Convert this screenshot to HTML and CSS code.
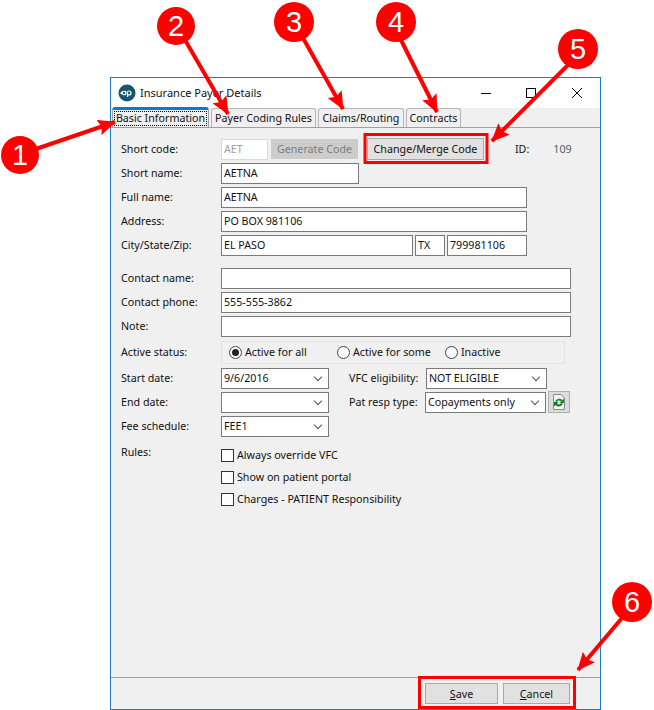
FILE: index.html
```html
<!DOCTYPE html>
<html lang="en">

<head>
    <meta charset="UTF-8">
    <meta name="viewport" content="width=device-width, initial-scale=1.0">
    <title>Insurance Payer Details</title>
    <link rel="stylesheet" href="styles.css">
</head>

<body>
    <div class="window">
        <!-- title bar -->
        <div class="titlebar">
            <svg class="logo" width="18" height="18" viewBox="0 0 18 18">
                <circle cx="9" cy="9" r="8.5" fill="#17566e" />
                <path d="M2 9 Q5 6 8 7 L8 11 Q5 12 2 9Z" fill="#fff" />
                <circle cx="6" cy="9" r="1.2" fill="#17566e" />
                <circle cx="11" cy="9" r="2" fill="none" stroke="#fff" stroke-width="1.2" />
                <path d="M9.6 9 V13" stroke="#fff" stroke-width="1.2" />
            </svg>
            <span class="title">Insurance Payer Details</span>
            <svg class="win-btns" width="101" height="12" viewBox="0 0 101 12">
                <path d="M0 6.5 H10" stroke="#000" fill="none" />
                <rect x="45.5" y="1.5" width="9" height="9" stroke="#000" fill="none" />
                <path d="M91 1 L101 11 M101 1 L91 11" stroke="#000" fill="none" />
            </svg>
        </div>

        <!-- tabs -->
        <div class="tabs">
            <div class="tab active"><span class="tab-focus">Basic Information</span></div>
            <div class="tab tab-payer">Payer Coding Rules</div>
            <div class="tab tab-claims">Claims/Routing</div>
            <div class="tab tab-contracts">Contracts</div>
        </div>

        <div class="form">
            <div class="row">
                <label>Short code:</label>
                <div class="field field-code disabled">AET</div>
                <button class="btn btn-generate">Generate Code</button>
                <button class="btn btn-change">Change/Merge Code</button>
                <span class="id-label">ID:</span>
                <span class="id-value">109</span>
            </div>
            <div class="row">
                <label>Short name:</label>
                <div class="field w-short">AETNA</div>
            </div>
            <div class="row">
                <label>Full name:</label>
                <div class="field w-full">AETNA</div>
            </div>
            <div class="row">
                <label>Address:</label>
                <div class="field w-full">PO BOX 981106</div>
            </div>
            <div class="row">
                <label>City/State/Zip:</label>
                <div class="field w-city">EL PASO</div>
                <div class="field w-state">TX</div>
                <div class="field w-zip">799981106</div>
            </div>

            <div class="row row-gap">
                <label>Contact name:</label>
                <div class="field w-wide"></div>
            </div>
            <div class="row">
                <label>Contact phone:</label>
                <div class="field w-wide">555-555-3862</div>
            </div>
            <div class="row">
                <label>Note:</label>
                <div class="field w-wide"></div>
            </div>

            <div class="row row-status">
                <label>Active status:</label>
                <div class="status-box">
                    <span class="radio checked"></span><span class="radio-text t-all">Active for all</span>
                    <span class="radio"></span><span class="radio-text t-some">Active for some</span>
                    <span class="radio"></span><span class="radio-text">Inactive</span>
                </div>
            </div>

            <div class="row row-dates">
                <label>Start date:</label>
                <div class="field select w-select">9/6/2016<span class="chevron"></span></div>
                <label class="side-label">VFC eligibility:</label>
                <div class="field select w-vfc">NOT ELIGIBLE<span class="chevron"></span></div>
            </div>
            <div class="row">
                <label>End date:</label>
                <div class="field select w-select"><span class="chevron"></span></div>
                <label class="side-label side-pat">Pat resp type:</label>
                <div class="field select w-vfc">Copayments only<span class="chevron"></span></div>
                <button class="btn-refresh">
                    <svg width="16" height="18" viewBox="0 0 16 18">
                        <path d="M2.5 1.5 H10 L13.5 5 V16.5 H2.5Z" fill="#f4f4f4" stroke="#8a8a8a" />
                        <path d="M4 8 Q8 3.5 11.5 7 L13 5.5 V10 H8.5 L10 8.5 Q8 6.5 5.5 9Z" fill="#1d8a2c" />
                        <path d="M12 11 Q8 15.5 4.5 12 L3 13.5 V9 H7.5 L6 10.5 Q8 12.5 10.5 10Z" fill="#0f7a24" />
                    </svg>
                </button>
            </div>
            <div class="row">
                <label>Fee schedule:</label>
                <div class="field select w-select">FEE1<span class="chevron"></span></div>
            </div>

            <div class="rules">
                <label>Rules:</label>
                <div class="rules-list">
                    <div class="check-row"><span class="check"></span>Always override VFC</div>
                    <div class="check-row"><span class="check"></span>Show on patient portal</div>
                    <div class="check-row"><span class="check"></span>Charges - PATIENT Responsibility</div>
                </div>
            </div>
        </div>

        <div class="footer">
            <button class="btn btn-save"><u>S</u>ave</button>
            <button class="btn btn-cancel"><u>C</u>ancel</button>
        </div>
    </div>

    <!-- callouts drawn over the screenshot -->
    <svg class="callouts" width="654" height="710" viewBox="0 0 654 710">
        <defs>
            <marker id="head" markerUnits="userSpaceOnUse" markerWidth="18" markerHeight="16" refX="17" refY="8"
                orient="auto">
                <path d="M0 0 L18 8 L0 16 L3 8Z" fill="#f00" />
            </marker>
        </defs>
        <g stroke="#f00" stroke-width="4" fill="none">
            <path d="M30 151 L115 122" marker-end="url(#head)" />
            <path d="M185 40 L228 114" marker-end="url(#head)" />
            <path d="M303 38 L343 109" marker-end="url(#head)" />
            <path d="M400 38 L437 112" marker-end="url(#head)" />
            <path d="M572 61 L492 141" marker-end="url(#head)" />
            <path d="M622 618 L578 670" marker-end="url(#head)" />
            <rect x="365" y="134.5" width="122" height="28" stroke-width="3" />
            <rect x="419.5" y="677.5" width="155" height="30" stroke-width="3" />
        </g>
        <g fill="#f00">
            <circle cx="20" cy="155" r="19" />
            <circle cx="176" cy="26" r="19" />
            <circle cx="294" cy="22" r="20" />
            <circle cx="396" cy="22" r="20" />
            <circle cx="578" cy="49" r="20" />
            <circle cx="632" cy="602" r="20" />
        </g>
        <g class="callout-num" text-anchor="middle" fill="#fff">
            <text x="20" y="165">1</text>
            <text x="176" y="36">2</text>
            <text x="294" y="32">3</text>
            <text x="396" y="32">4</text>
            <text x="578" y="59">5</text>
            <text x="632" y="612">6</text>
        </g>
    </svg>
</body>

</html>
```

FILE: styles.css
```css
* {
    margin: 0;
    padding: 0;
    box-sizing: border-box;
}

body {
    width: 654px;
    height: 710px;
    padding: 77px 0 0 110px;
    position: relative;
    overflow: hidden;
    background: #fff;
    font-family: "Noto Sans", sans-serif;
    font-size: 10.7px;
    color: #111;
}

.window {
    width: 491px;
    height: 633px;
    border: 1px solid #1b7fcc;
    display: flex;
    flex-direction: column;
    background: #f0f0f0;
}

/* title bar */
.titlebar {
    height: 30px;
    background: #fff;
    display: flex;
    align-items: center;
    padding-left: 7px;
    flex: none;
}

.logo {
    margin-right: 4px;
}

.title {
    font-size: 11px;
    margin-bottom: 2px;
}

.win-btns {
    margin-left: auto;
    margin-right: 18px;
}

/* tabs */
.tabs {
    height: 20px;
    flex: none;
    display: flex;
    align-items: flex-end;
    border-bottom: 1px solid #a0a0a0;
    padding-left: 1px;
    background: #f0f0f0;
}

.tab {
    height: 19px;
    border: 1px solid #b4b4b4;
    border-bottom: none;
    border-radius: 3px 3px 0 0;
    background: #f0f0f0;
    display: flex;
    align-items: center;
    justify-content: center;
    margin-left: 2px;
    white-space: nowrap;
}

.tab.active {
    width: 97px;
    height: 20px;
    margin-left: 0;
    border-top: 3px solid #0b78d0;
    border-left-color: #a0a0a0;
    border-right-color: #a0a0a0;
}

.tab-focus {
    outline: 1px dotted #000;
    outline-offset: 0;
    padding: 0 1px;
    line-height: 13px;
}

.tab-payer {
    width: 105px;
}

.tab-claims {
    width: 86px;
}

.tab-contracts {
    width: 55px;
}

/* form */
.form {
    flex: 1;
    padding: 9px 0 0 10px;
}

.row {
    height: 24px;
    display: flex;
    align-items: center;
}

.row > label {
    width: 100px;
    flex: none;
}

.row-gap {
    margin-top: 9px;
}

.row-status,
.row-dates {
    margin-top: 2px;
}

.field {
    height: 21px;
    border: 1px solid #7a7a7a;
    background: #fff;
    padding: 0 2px;
    line-height: 18px;
    white-space: nowrap;
    flex: none;
}

.field.disabled {
    border-color: #d9d9d9;
    color: #a0a0a0;
}

.field-code {
    width: 47px;
}

.w-short {
    width: 138px;
}

.w-full {
    width: 306px;
}

.w-city {
    width: 192px;
}

.w-state {
    width: 30px;
    margin-left: 2px;
}

.w-zip {
    width: 80px;
    margin-left: 2px;
}

.w-wide {
    width: 350px;
}

.select {
    position: relative;
}

.w-select {
    width: 108px;
}

.w-vfc {
    width: 121px;
}

.chevron {
    position: absolute;
    right: 7px;
    top: 5px;
    width: 6px;
    height: 6px;
    border-right: 1px solid #555;
    border-bottom: 1px solid #555;
    transform: rotate(45deg);
}

.btn {
    height: 21px;
    border: 1px solid #a9a9a9;
    background: #e1e1e1;
    font-family: inherit;
    font-size: inherit;
    color: #111;
    flex: none;
}

.btn-generate {
    width: 87px;
    height: 20px;
    margin-left: 3px;
    background: #cccccc;
    border-color: #cccccc;
    color: #7d7d7d;
}

.btn-change {
    width: 117px;
    height: 22px;
    margin-left: 9px;
}

.id-label {
    margin-left: 31px;
}

.id-value {
    margin-left: 24px;
    color: #555b70;
}

/* active status */
.status-box {
    width: 344px;
    height: 23px;
    border: 1px solid #e3e3e3;
    display: flex;
    align-items: center;
    padding-left: 7px;
}

.radio {
    width: 13px;
    height: 13px;
    border: 1px solid #444;
    border-radius: 50%;
    background: #fff;
    margin-right: 3px;
    position: relative;
    flex: none;
}

.radio.checked::after {
    content: "";
    position: absolute;
    left: 2px;
    top: 2px;
    width: 7px;
    height: 7px;
    border-radius: 50%;
    background: #222;
}

.t-all {
    width: 92px;
}

.t-some {
    width: 92px;
}

.row > .side-label {
    margin-left: 20px;
    width: 77px;
}

.row > .side-pat {
    width: 76px;
}

.btn-refresh {
    width: 22px;
    height: 22px;
    margin-left: 2px;
    border: 1px solid #b0b0b0;
    background: #dcdcdc;
    display: flex;
    align-items: center;
    justify-content: center;
    flex: none;
}

/* rules */
.rules {
    display: flex;
    margin-top: 6px;
}

.rules > label {
    width: 100px;
    flex: none;
    line-height: 16px;
}

.rules-list {
    display: flex;
    flex-direction: column;
}

.check-row {
    height: 22px;
    display: flex;
    align-items: center;
}

.check {
    width: 13px;
    height: 13px;
    border: 1px solid #333;
    background: #fff;
    margin-right: 3px;
    flex: none;
}

/* footer */
.footer {
    height: 32px;
    flex: none;
    border-top: 1px solid #a0a0a0;
    display: flex;
    justify-content: flex-end;
    align-items: center;
    gap: 5px;
    padding-right: 30px;
}

.btn-save {
    width: 73px;
}

.btn-cancel {
    width: 67px;
}

/* callouts */
.callouts {
    position: absolute;
    left: 0;
    top: 0;
    pointer-events: none;
}

.callout-num {
    font-family: "Liberation Sans", sans-serif;
    font-size: 29px;
}
```
